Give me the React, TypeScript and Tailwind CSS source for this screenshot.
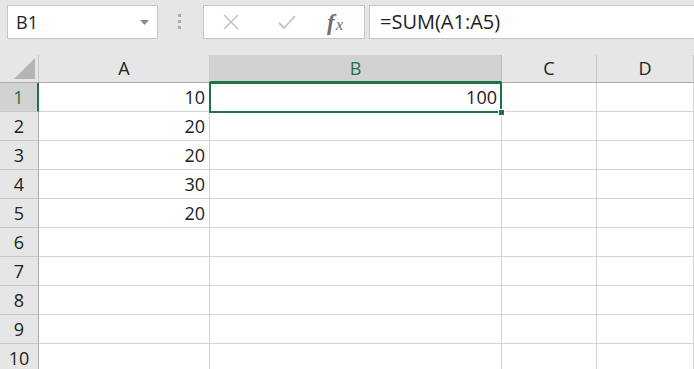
const COLS = [
  { key: 'A', width: 'w-[171px]' },
  { key: 'B', width: 'w-[292px]' },
  { key: 'C', width: 'w-[95px]' },
  { key: 'D', width: 'w-[97px]' },
];

const DATA: Record<number, Record<string, string>> = {
  1: { A: '10', B: '100' },
  2: { A: '20' },
  3: { A: '20' },
  4: { A: '30' },
  5: { A: '20' },
};

const ROWS = [1, 2, 3, 4, 5, 6, 7, 8, 9, 10];

function FormulaButtons() {
  return (
    <div className="ml-[22px] flex h-[34px] w-[162px] items-center border border-[#c6c6c6] bg-white">
      {/* cancel */}
      <svg className="ml-[18px]" width="18" height="18" viewBox="0 0 18 18">
        <path d="M2 2 L16 16 M16 2 L2 16" stroke="#c3c3c3" strokeWidth="1.6" fill="none" />
      </svg>
      {/* enter */}
      <svg className="ml-[37px]" width="20" height="18" viewBox="0 0 20 18">
        <path d="M2 10 L7 15 L18 3" stroke="#c3c3c3" strokeWidth="1.8" fill="none" />
      </svg>
      <span
        className="ml-[30px] flex items-baseline italic text-[#6e6e6e] leading-none"
        style={{ fontFamily: '"Liberation Serif", serif' }}
      >
        <span className="text-[23px] font-semibold">f</span>
        <span className="ml-[1px] text-[17px]">x</span>
      </span>
    </div>
  );
}

export default function App() {
  return (
    <div
      className="w-[694px] h-[369px] overflow-hidden bg-[#e6e6e6] text-[#222]"
      style={{ fontFamily: '"Open Sans", "Noto Sans", sans-serif' }}
    >
      {/* Formula bar */}
      <div className="flex h-[55px] items-start pt-[5px] pl-[7px]">
        <div className="flex h-[34px] w-[151px] items-center justify-between border border-[#c6c6c6] bg-white pl-[8px] pr-[8px]">
          <span className="text-[18px] leading-none">B1</span>
          <svg width="9" height="5" viewBox="0 0 9 5">
            <path d="M0 0 H9 L4.5 5 Z" fill="#8a8a8a" />
          </svg>
        </div>
        <div className="ml-[20px] mt-[9px] flex flex-col gap-[3px]">
          <span className="block h-[3px] w-[3px] bg-[#adadad]" />
          <span className="block h-[3px] w-[3px] bg-[#adadad]" />
          <span className="block h-[3px] w-[3px] bg-[#adadad]" />
        </div>
        <FormulaButtons />
        <div className="ml-[4px] flex h-[34px] flex-1 items-center border border-r-0 border-[#c6c6c6] bg-white pl-[10px]">
          <span className="text-[20px] leading-none">=SUM(A1:A5)</span>
        </div>
      </div>

      {/* Grid */}
      <div className="relative">
        {/* Column headers */}
        <div className="flex h-[28px] border-b border-[#ababab]">
          <div className="relative w-[39px] shrink-0 border-r border-[#c8c8c8]">
            <svg className="absolute right-[3px] bottom-[3px]" width="21" height="21" viewBox="0 0 21 21">
              <path d="M21 0 V21 H0 Z" fill="#b4b4b4" />
            </svg>
          </div>
          {COLS.map((c) => (
            <div
              key={c.key}
              className={`${c.width} shrink-0 flex items-center justify-center border-r text-[18px] ${
                c.key === 'B'
                  ? 'bg-[#d2d2d2] text-[#217346] border-[#bdbdbd] border-b-2 border-b-[#217346] -mb-[1px]'
                  : 'border-[#c8c8c8]'
              }`}
            >
              {c.key}
            </div>
          ))}
        </div>

        {ROWS.map((r) => (
          <div key={r} className="flex h-[29px] bg-white">
            <div
              className={`w-[39px] shrink-0 flex items-center justify-center border-b text-[18px] ${
                r === 1
                  ? 'bg-[#d2d2d2] text-[#217346] border-r-2 border-r-[#217346] border-b-[#c8c8c8]'
                  : 'bg-[#e6e6e6] border-r border-r-[#ababab] border-b-[#c8c8c8]'
              }`}
            >
              {r}
            </div>
            {COLS.map((c) => (
              <div
                key={c.key}
                className={`${c.width} shrink-0 flex items-end justify-end border-r border-b border-[#d4d4d4] pr-[4px] pb-[2px] text-[18px] leading-[24px]`}
              >
                {DATA[r]?.[c.key] ?? ''}
              </div>
            ))}
          </div>
        ))}

        {/* active cell B1 */}
        <div className="absolute left-[209px] top-[27px] h-[31px] w-[293px] border-2 border-[#217346]">
          <span className="absolute -right-[5px] -bottom-[5px] block h-[7px] w-[7px] border border-white bg-[#217346]" />
        </div>
      </div>
    </div>
  );
}
